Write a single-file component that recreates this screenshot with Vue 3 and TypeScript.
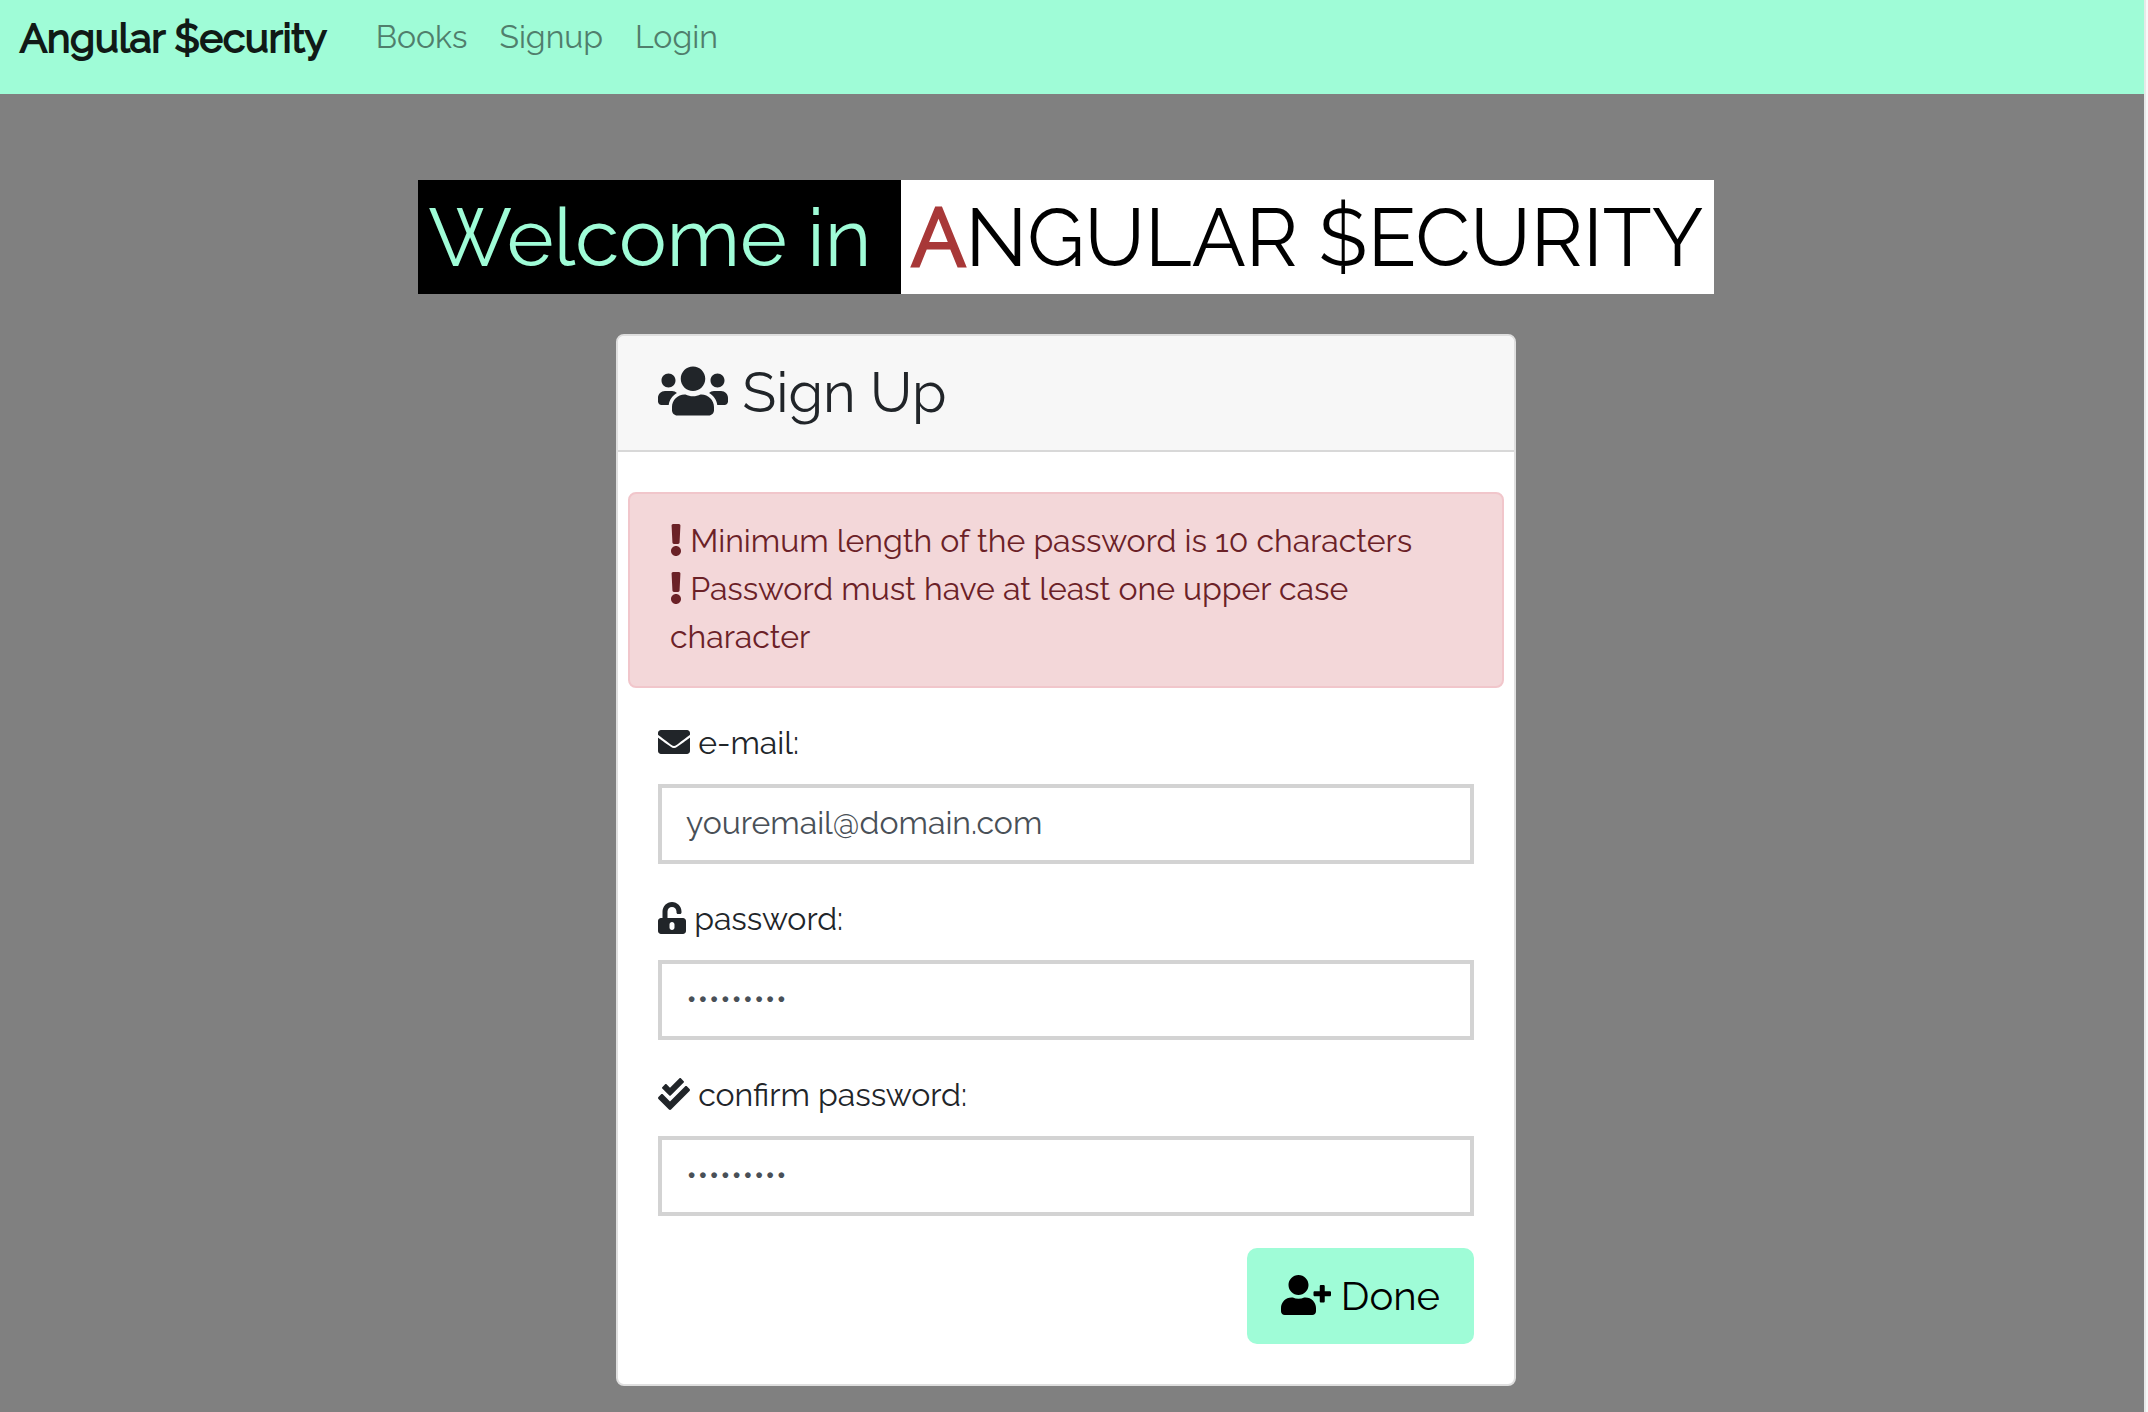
<script setup lang="ts">
import { ref } from 'vue'

interface Icon {
  box: string
  path: string
}

interface Field {
  id: string
  label: string
  type: string
  icon: keyof typeof icons
  iconWidth: number
}

const icons = {
  users: {
    box: '0 0 640 512',
    path: 'M96 224c35.3 0 64-28.7 64-64s-28.7-64-64-64-64 28.7-64 64 28.7 64 64 64zm448 0c35.3 0 64-28.7 64-64s-28.7-64-64-64-64 28.7-64 64 28.7 64 64 64zm32 32h-64c-17.6 0-33.5 7.1-45.1 18.6 40.3 22.1 68.9 62 75.1 109.4h66c17.7 0 32-14.3 32-32v-32c0-35.3-28.7-64-64-64zm-256 0c61.9 0 112-50.1 112-112S381.9 32 320 32 208 82.1 208 144s50.1 112 112 112zm76.8 32h-8.3c-20.8 10-43.9 16-68.5 16s-47.6-6-68.5-16h-8.3C179.6 288 128 339.6 128 403.2V432c0 26.5 21.5 48 48 48h288c26.5 0 48-21.5 48-48v-28.8c0-63.6-51.6-115.2-115.2-115.2zm-223.7-13.4C161.5 263.1 145.6 256 128 256H64c-35.3 0-64 28.7-64 64v32c0 17.7 14.3 32 32 32h65.9c6.3-47.4 34.9-87.3 75.2-109.4z',
  },
  exclamation: {
    box: '0 0 192 512',
    path: 'M176 432c0 44.112-35.888 80-80 80s-80-35.888-80-80 35.888-80 80-80 80 35.888 80 80zM25.26 25.199l13.6 272C39.499 309.972 50.041 320 62.83 320h66.34c12.789 0 23.331-10.028 23.97-22.801l13.6-272C167.425 11.49 156.496 0 142.77 0H49.23C35.504 0 24.575 11.49 25.26 25.199z',
  },
  envelope: {
    box: '0 0 512 512',
    path: 'M502.3 190.8c3.9-3.1 9.7-.2 9.7 4.7V400c0 26.5-21.5 48-48 48H48c-26.5 0-48-21.5-48-48V195.6c0-5 5.7-7.8 9.7-4.7 22.4 17.4 52.1 39.5 154.1 113.6 21.1 15.4 56.7 47.8 92.2 47.6 35.7.3 72-32.8 92.3-47.6 102-74.1 131.6-96.3 154-113.7zM256 320c23.2.4 56.6-29.2 73.4-41.4 132.7-96.3 142.8-104.7 173.4-128.7 5.8-4.5 9.2-11.5 9.2-18.9v-19c0-26.5-21.5-48-48-48H48c-26.5 0-48 21.5-48 48v19c0 7.4 3.4 14.3 9.2 18.9 30.6 23.9 40.7 32.4 173.4 128.7 16.8 12.2 50.2 41.8 73.4 41.4z',
  },
  unlock: {
    box: '0 0 448 512',
    path: 'M400 256H152V152.9c0-39.6 31.7-72.5 71.3-72.9 40-.4 72.7 32.1 72.7 72v16c0 13.3 10.7 24 24 24h32c13.3 0 24-10.7 24-24v-16C376 68 307.5-.3 223.5 0 139.5.3 72 69.5 72 153.5V256H48c-26.5 0-48 21.5-48 48v160c0 26.5 21.5 48 48 48h352c26.5 0 48-21.5 48-48V304c0-26.5-21.5-48-48-48zM264 408c0 22.1-17.9 40-40 40s-40-17.9-40-40v-48c0-22.1 17.9-40 40-40s40 17.9 40 40v48z',
  },
  checkDouble: {
    box: '0 0 512 512',
    path: 'M505 174.8l-39.6-39.6c-9.4-9.4-24.6-9.4-33.9 0L192 374.7 80.6 263.2c-9.4-9.4-24.6-9.4-33.9 0L7 302.9c-9.4 9.4-9.4 24.6 0 34L175 505c9.4 9.4 24.6 9.4 33.9 0l296-296.2c9.4-9.5 9.4-24.7.1-34zm-324.3 106c6.2 6.3 16.4 6.3 22.6 0l208-208.2c6.2-6.3 6.2-16.4 0-22.6L366.1 4.7c-6.2-6.3-16.4-6.3-22.6 0L192 156.2l-55.4-55.5c-6.2-6.3-16.4-6.3-22.6 0L68.7 146c-6.2 6.3-6.2 16.4 0 22.6l112 112.2z',
  },
  userPlus: {
    box: '0 0 640 512',
    path: 'M624 208h-64v-64c0-8.8-7.2-16-16-16h-32c-8.8 0-16 7.2-16 16v64h-64c-8.8 0-16 7.2-16 16v32c0 8.8 7.2 16 16 16h64v64c0 8.8 7.2 16 16 16h32c8.8 0 16-7.2 16-16v-64h64c8.8 0 16-7.2 16-16v-32c0-8.8-7.2-16-16-16zm-400 48c70.7 0 128-57.3 128-128S294.7 0 224 0 96 57.3 96 128s57.3 128 128 128zm89.6 32h-16.7c-22.2 10.2-46.9 16-72.9 16s-50.6-5.8-72.9-16h-16.7C60.2 288 0 348.2 0 422.4V464c0 26.5 21.5 48 48 48h352c26.5 0 48-21.5 48-48v-41.6c0-74.2-60.2-134.4-134.4-134.4z',
  },
} satisfies Record<string, Icon>

const links: string[] = ['Books', 'Signup', 'Login']

const errors: string[] = [
  'Minimum length of the password is 10 characters',
  'Password must have at least one upper case character',
]

const fields: Field[] = [
  { id: 'email', label: 'e-mail:', type: 'email', icon: 'envelope', iconWidth: 32 },
  { id: 'password', label: 'password:', type: 'password', icon: 'unlock', iconWidth: 28 },
  { id: 'confirm', label: 'confirm password:', type: 'password', icon: 'checkDouble', iconWidth: 32 },
]

const form = ref<Record<string, string>>({
  email: 'youremail@domain.com',
  password: 'password1',
  confirm: 'password1',
})
</script>

<template>
  <div class="page">
    <header class="navbar">
      <a class="brand" href="#">Angular $ecurity</a>
      <nav class="links">
        <a v-for="link in links" :key="link" href="#">{{ link }}</a>
      </nav>
    </header>

    <main class="content">
      <h1 class="title">
        <span class="welcome">Welcome in</span>
        <span class="name"><b>A</b>NGULAR $ECURITY</span>
      </h1>

      <section class="card">
        <h2 class="card-header">
          <svg width="70" height="56" :viewBox="icons.users.box" aria-hidden="true"><path :d="icons.users.path" /></svg>
          Sign Up
        </h2>

        <form class="card-body" @submit.prevent>
          <div class="alert" role="alert">
            <p v-for="error in errors" :key="error">
              <svg width="12" height="32" :viewBox="icons.exclamation.box" aria-hidden="true"><path :d="icons.exclamation.path" /></svg>
              {{ error }}
            </p>
          </div>

          <div v-for="field in fields" :key="field.id" class="field">
            <label :for="field.id">
              <svg :width="field.iconWidth" height="32" :viewBox="icons[field.icon].box" aria-hidden="true"><path :d="icons[field.icon].path" /></svg>
              {{ field.label }}
            </label>
            <input :id="field.id" v-model="form[field.id]" :type="field.type" />
          </div>

          <button class="done" type="submit">
            <svg width="50" height="40" :viewBox="icons.userPlus.box" aria-hidden="true"><path :d="icons.userPlus.path" /></svg>
            Done
          </button>
        </form>
      </section>
    </main>
  </div>
</template>

<style>
body {
  margin: 0;
  background: #f8f8f8;
}
</style>

<style scoped>
.page {
  box-sizing: border-box;
  min-height: 100vh;
  margin-right: 2px;
  border-right: 2px solid #e8e8e8;
  background: #808080;
  color: #212529;
  font: 400 32px/48px Raleway, Inter, sans-serif;
}

svg {
  fill: currentColor;
  vertical-align: -4px;
}

.navbar {
  display: flex;
  align-items: flex-start;
  gap: 49px;
  padding: 8px 20px 26px;
  background: #9ffcd7;
}

.navbar a {
  text-decoration: none;
}

.brand {
  color: #101a16;
  font-size: 40px;
  line-height: 60px;
  -webkit-text-stroke: 2px currentColor;
}

.links {
  display: flex;
  gap: 32px;
  line-height: 58px;
}

.links a {
  color: #507e6c;
}

.content {
  display: flex;
  flex-direction: column;
  align-items: center;
  gap: 40px;
  padding: 86px 12px 26px 0;
}

.title {
  display: flex;
  margin: 0;
  font-size: 80px;
  font-weight: 400;
  line-height: 112px;
  white-space: nowrap;
}

.welcome {
  padding: 2px 30px 0 10px;
  background: #000;
  color: #9ffcd7;
}

.name {
  padding: 2px 10px 0;
  background: #fff;
  color: #000;
}

.name b {
  color: #a83838;
  font-weight: 400;
  -webkit-text-stroke: 3px currentColor;
}

.card {
  box-sizing: border-box;
  width: 900px;
  max-width: 100%;
  border: 2px solid #dfdfdf;
  border-radius: 8px;
  background: #fff;
}

.card-header {
  margin: 0;
  padding: 0 40px 2px;
  border-bottom: 2px solid #d8d8d8;
  border-radius: 6px 6px 0 0;
  background: #f7f7f7;
  font-size: 56px;
  font-weight: 400;
  line-height: 112px;
}

.card-header svg {
  vertical-align: -7px;
}

.card-body {
  display: flex;
  flex-direction: column;
  padding: 40px;
}

.alert {
  margin: 0 -30px;
  padding: 23px 40px 25px;
  border: 2px solid #f1c6cb;
  border-radius: 8px;
  background: #f3d7d9;
  color: #6b2127;
}

.alert p {
  margin: 0;
}

.field {
  display: flex;
  flex-direction: column;
  gap: 17px;
  margin-top: 31px;
}

.field input {
  box-sizing: border-box;
  width: 100%;
  height: 80px;
  padding: 0 24px 4px;
  border: 4px solid #d3d3d3;
  border-radius: 0;
  background: #fff;
  color: #495057;
  font: inherit;
}

.done {
  align-self: flex-end;
  margin-top: 32px;
  padding: 0 34px;
  border: 0;
  border-radius: 10px;
  background: #9ffcd7;
  color: #000;
  font: inherit;
  font-size: 40px;
  line-height: 96px;
}

.done svg {
  vertical-align: -5px;
}
</style>
